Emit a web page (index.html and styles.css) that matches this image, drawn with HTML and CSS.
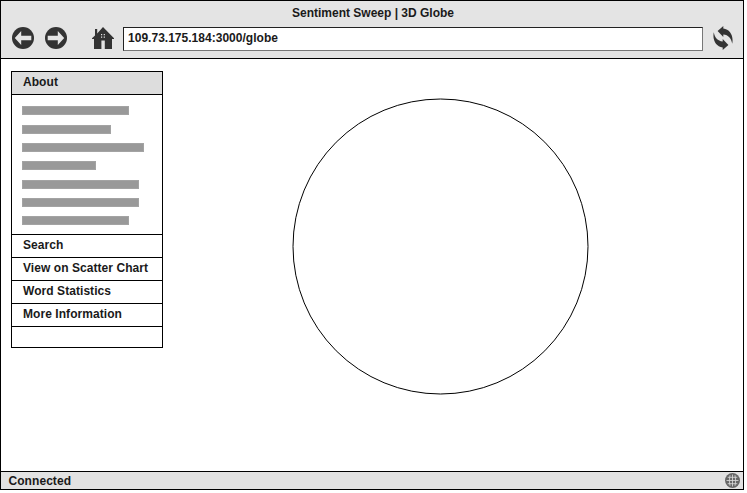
FILE: index.html
```html
<!DOCTYPE html>
<html lang="en">
<head>
<meta charset="utf-8">
<title>Sentiment Sweep | 3D Globe</title>
<link rel="stylesheet" href="styles.css">
</head>
<body>
<div class="window">
  <header class="chrome">
    <div class="title"><span>Sentiment Sweep | 3D Globe</span></div>
    <div class="toolbar">
      <svg class="icon back" width="22" height="22" viewBox="0 0 22 22"><circle cx="11" cy="11" r="11"/><path class="arrow" d="M2.8 11 9.2 4V8.8H19.3V13.2H9.2V18Z"/></svg>
      <svg class="icon forward" width="22" height="22" viewBox="0 0 22 22"><circle cx="11" cy="11" r="11"/><path class="arrow" d="M19.2 11 12.8 4V8.8H2.7V13.2H12.8V18Z"/></svg>
      <svg class="icon home" width="22" height="22" viewBox="0 0 22 22"><path d="M0 11.3 3 8.5V2H5.2V6.4L11 0 22 11.3V12H20V22H12.8V13.6H9.4V22H2V12H0Z"/><path class="panes" d="M9 7h1.2v1.2H9zM11.7 7h1.2v1.2h-1.2zM9 9.6h1.2v1.2H9zM11.7 9.6h1.2v1.2h-1.2z"/></svg>
      <div class="address"><span>109.73.175.184:3000/globe</span></div>
      <svg class="icon reload" width="20" height="24" viewBox="0 0 20 24"><path d="M4.6 5 10.3 0V2.6C17 3.4 20.8 10 19.2 17.8 18.2 12.4 15.4 9 10.3 8.6V11Z"/><path d="M15.4 19 9.7 24V21.4C3 20.6-.8 14 .8 6.2 1.8 11.6 4.6 15 9.7 15.4V13Z"/></svg>
    </div>
  </header>
  <main class="content">
    <nav class="panel">
      <div class="item active">About</div>
      <div class="copy">
        <i class="bar w107"></i><i class="bar w89 gap"></i><i class="bar w122"></i><i class="bar w74"></i><i class="bar w117 gap"></i><i class="bar w117"></i><i class="bar w107"></i>
      </div>
      <div class="item">Search</div>
      <div class="item">View on Scatter Chart</div>
      <div class="item">Word Statistics</div>
      <div class="item">More Information</div>
      <div class="blank"></div>
    </nav>
    <svg class="globe" width="297" height="297" viewBox="0 0 297 297"><circle cx="148.5" cy="148.5" r="147.5"/></svg>
  </main>
  <footer class="status">
    <span>Connected</span>
    <svg width="15" height="15" viewBox="0 0 15 15"><circle class="disc" cx="7.5" cy="7.5" r="7.5"/><path class="grid" d="M7.5 1.5V13.5M1.5 7.5H13.5M2.7 4.3H12.3M2.7 10.7H12.3M5 2.2Q3.6 7.5 5 12.8M10 2.2Q11.4 7.5 10 12.8"/></svg>
  </footer>
</div>
</body>
</html>
```
FILE: styles.css
```css
* { box-sizing: border-box; }
body {
  margin: 0;
  background: #fff;
  color: #1a1a1a;
  font: bold 12px/14px "Liberation Sans", Arial, sans-serif;
  letter-spacing: 0.06px;
}
svg { display: block; flex: none; }
.window {
  width: 744px;
  height: 490px;
  border: 1px solid #000;
  display: flex;
  flex-direction: column;
}
.chrome {
  height: 58px;
  flex: none;
  background: #e4e4e4;
  border-bottom: 1px solid #000;
}
.title { height: 26px; padding-top: 5px; padding-left: 2px; text-align: center; letter-spacing: 0; }
.toolbar { display: flex; align-items: flex-start; height: 25px; padding-left: 11px; }
.icon { fill: #333; }
.arrow, .panes { fill: #e4e4e4; }
.forward { margin-left: 11px; }
.home { margin-left: 25px; }
.address {
  width: 580px;
  height: 24px;
  margin-left: 9px;
  padding: 3px 4px;
  background: #fff;
  border: 1px solid #777;
  border-top-color: #222;
  border-left-color: #222;
  letter-spacing: 0.02px;
}
.reload { margin: -1px 0 0 10px; }
.content { flex: 1; display: flex; align-items: flex-start; padding: 12px 0 0 10px; }
.panel { width: 152px; border: 1px solid #000; }
.item { height: 23px; padding: 3px 0 0 11px; border-bottom: 1px solid #000; white-space: nowrap; }
.active { background: #ddd; }
.copy {
  height: 140px;
  padding: 11px 0 0 10px;
  display: flex;
  flex-direction: column;
  gap: 9px;
  border-bottom: 1px solid #000;
}
.bar { height: 9px; flex: none; background: #999; border: 1px solid #a3a3a3; }
.gap { margin-top: 1px; }
.w74 { width: 74px; }
.w89 { width: 89px; }
.w107 { width: 107px; }
.w117 { width: 117px; }
.w122 { width: 122px; }
.blank { height: 20px; }
.globe { margin: 27px 0 0 129px; fill: none; stroke: #000; stroke-width: 1; }
.status {
  height: 18px;
  flex: none;
  display: flex;
  align-items: center;
  justify-content: space-between;
  padding: 0 3px 0 7.5px;
  background: #e2e2e2;
  border-top: 1px solid #000;
}
.disc { fill: #666; }
.grid { fill: none; stroke: #ddd; stroke-width: .8; }
```
